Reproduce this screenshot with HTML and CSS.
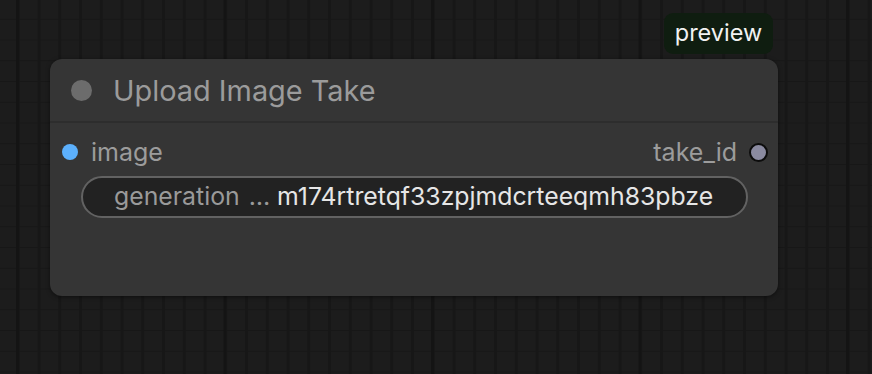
FILE: index.html
```html
<!DOCTYPE html>
<html>
<head>
<meta charset="utf-8">
<link rel="stylesheet" href="styles.css">
</head>
<body>
<div class="canvas">
  <div class="node">
    <div class="badge">preview</div>
    <div class="node-header">
      <span class="status-dot"></span>
      <span class="node-title">Upload Image Take</span>
    </div>
    <div class="node-body">
      <div class="slots">
        <div class="slot slot-in">
          <span class="slot-dot slot-dot-in"></span>
          <span class="slot-label">image</span>
        </div>
        <div class="slot slot-out">
          <span class="slot-label">take_id</span>
          <span class="slot-dot slot-dot-out"></span>
        </div>
      </div>
      <div class="widget">
        <span class="widget-name">generation</span>
        <span class="widget-ellipsis">…</span>
        <span class="widget-value">m174rtretqf33zpjmdcrteeqmh83pbze</span>
      </div>
    </div>
  </div>
</div>
</body>
</html>
```
FILE: styles.css
```css
html, body {
  margin: 0;
  padding: 0;
}
body {
  width: 872px;
  height: 374px;
  overflow: hidden;
  font-family: Inter, "Noto Sans", sans-serif;
  background-color: #1c1c1c;
  background-image:
    linear-gradient(to right, rgba(0,0,0,0) 16px, #141414 16px, #141414 19px, rgba(0,0,0,0) 19px),
    linear-gradient(to right, rgba(0,0,0,0) 17px, #171717 17px, #171717 19.5px, rgba(0,0,0,0) 19.5px),
    linear-gradient(to bottom, rgba(0,0,0,0) 19.5px, #171717 19.5px, #171717 22px, rgba(0,0,0,0) 22px);
  background-size: 207.5px 100%, 20.75px 100%, 100% 20.75px;
  background-position: 0 0, 0 0, 0 -1px;
}
.canvas {
  padding: 59px 0 0 50px;
}
.node {
  position: relative;
  width: 728px;
  height: 237px;
  background: #353535;
  border-radius: 12px;
  box-shadow: 0 1px 4px rgba(0,0,0,0.5);
  display: flex;
  flex-direction: column;
}
.badge {
  position: absolute;
  top: -46px;
  right: 5px;
  height: 41px;
  width: 109px;
  box-sizing: border-box;
  background: #0f1d10;
  border-radius: 9px;
  color: #f2f2f2;
  font-size: 23.5px;
  display: flex;
  align-items: center;
  justify-content: center;
  padding-bottom: 2px;
}
.node-header {
  height: 62px;
  display: flex;
  align-items: center;
  padding-left: 21px;
  border-bottom: 2px solid #2d2d2d;
}
.status-dot {
  width: 21px;
  height: 21px;
  border-radius: 50%;
  background: #6c6c6c;
  margin-right: 21px;
}
.node-title {
  color: #9b9b9b;
  font-size: 28.9px;
  padding-top: 1px;
}
.node-body {
  display: flex;
  flex-direction: column;
  padding: 15px 10px 0 12px;
}
.slots {
  display: flex;
  justify-content: space-between;
  align-items: center;
  height: 28px;
}
.slot {
  display: flex;
  align-items: center;
}
.slot-label {
  color: #9c9c9c;
  font-size: 25px;
}
.slot-dot {
  width: 16px;
  height: 16px;
  border-radius: 50%;
  box-sizing: border-box;
}
.slot-dot-in {
  background: #5cb0fc;
  margin-right: 13px;
}
.slot-dot-out {
  background: #8a8aa0;
  border: 2px solid #0c0c0c;
  width: 19px;
  height: 19px;
  margin-left: 12px;
}
.widget {
  margin: 10px 20px 0 19px;
  height: 42px;
  box-sizing: border-box;
  border: 2px solid #626262;
  border-radius: 21px;
  background: #222222;
  display: flex;
  align-items: center;
  padding: 0 0 2px 31px;
  font-size: 24.8px;
  white-space: nowrap;
}
.widget-name {
  color: #9a9a9a;
}
.widget-ellipsis {
  color: #9a9a9a;
  margin-left: 9px;
  margin-right: 7px;
}
.widget-value {
  color: #e6e6e6;
}
```
